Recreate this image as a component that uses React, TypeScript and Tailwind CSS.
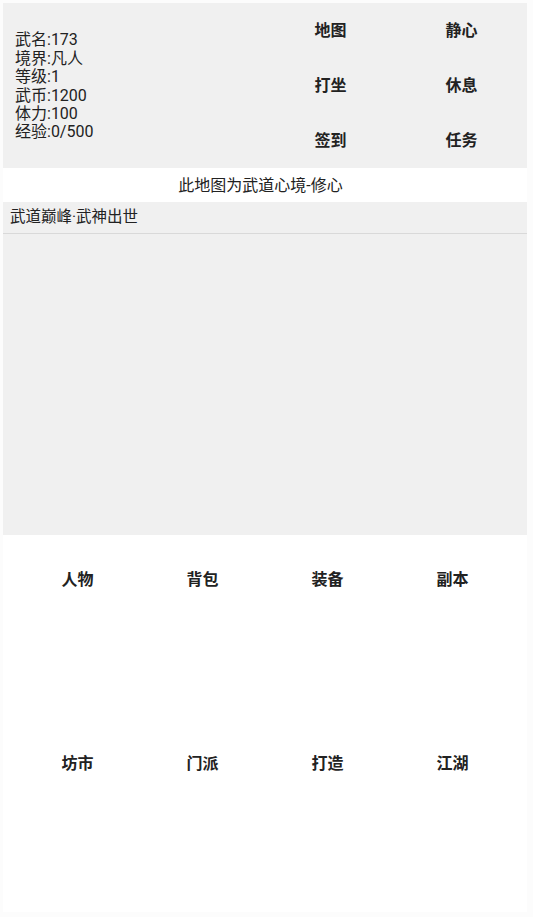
import React from "react"

const stats = ["武名:173", "境界:凡人", "等级:1", "武币:1200", "体力:100", "经验:0/500"]
const actions = ["地图", "静心", "打坐", "休息", "签到", "任务"]
const menus = ["人物", "背包", "装备", "副本", "坊市", "门派", "打造", "江湖"]

const App = () => {
  return (
    <div
      className="w-[533px] h-[917px] bg-[#fcfcfc] pt-[3px] pl-[3px] pr-[6px] text-[#222]"
      style={{ fontFamily: '"Roboto", "Noto Sans CJK SC", sans-serif' }}
    >
      <div className="h-[165px] bg-[#f0f0f0] grid grid-cols-2">
        <div className="flex items-center pl-[12px] pt-[2px]">
          <div className="text-[16px] leading-[18.4px]">
            {stats.map((s) => (
              <div key={s}>{s}</div>
            ))}
          </div>
        </div>
        <div className="grid grid-cols-2 grid-rows-3">
          {actions.map((a) => (
            <div key={a} className="flex items-center justify-center font-bold text-[16px]">
              {a}
            </div>
          ))}
        </div>
      </div>

      <div className="h-[34px] bg-white flex items-center justify-center pr-[9px] pt-[1px] text-[16px]">
        此地图为武道心境-修心
      </div>

      <div className="h-[32px] bg-[#f0f0f0] border-b border-[#d9d9d9] flex items-center pl-[7px] text-[15.5px]">
        武道巅峰·武神出世
      </div>

      <div className="h-[301px] bg-[#f0f0f0]" />

      <div className="h-[377px] bg-white grid grid-cols-4 grid-rows-[184px_184px] content-start px-[12px]">
        {menus.map((m) => (
          <div key={m} className="flex justify-center pt-[33px] font-bold text-[16px]">
            {m}
          </div>
        ))}
      </div>
    </div>
  )
}

export default App
